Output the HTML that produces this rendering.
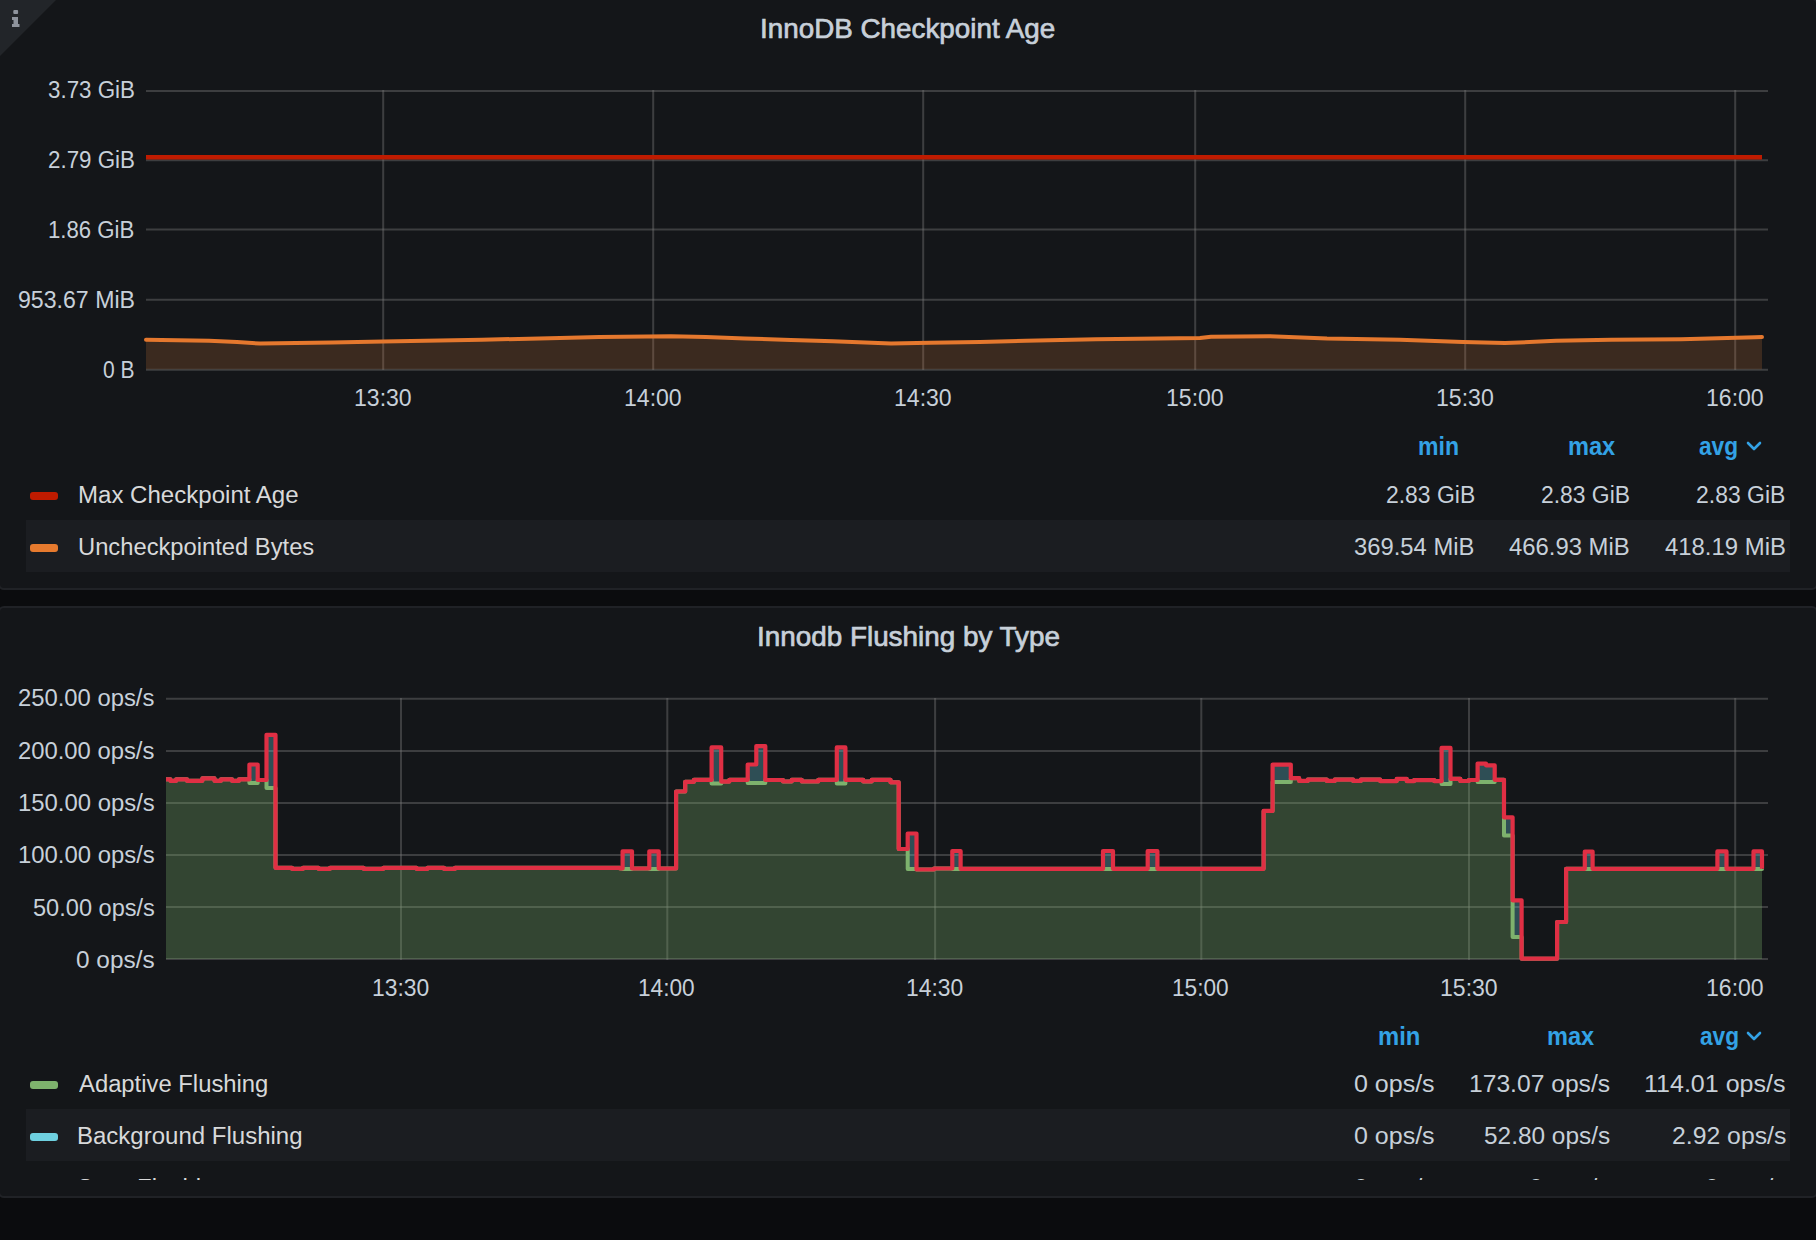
<!DOCTYPE html>
<html><head><meta charset="utf-8"><style>
*{margin:0;padding:0;box-sizing:border-box}
html,body{width:1816px;height:1240px;overflow:hidden;background:#0b0c0e;font-family:"Liberation Sans",sans-serif;color:#c7d0d9}
.panel{position:absolute;left:-2px;width:1820px;background:#141619;border:2px solid #202226;border-radius:6px;overflow:hidden}
.t{position:absolute;white-space:pre;line-height:1}
.title{font-size:28px;font-weight:400;-webkit-text-stroke:0.7px #c7d0d9;color:#c7d0d9}
.ax{font-size:23.5px;color:#c7d0d9}
.lg{font-size:23.5px;color:#d8d9da}
.lv{font-size:23.5px;color:#c7d0d9}
.hd{font-size:26px;font-weight:700;color:#33a2e5}
.sw{position:absolute;width:28px;height:8px;border-radius:3px}
.row{position:absolute;left:26px;width:1764px;height:52px;background:#1b1d21}
svg{position:absolute;left:0;top:0}
</style></head><body>

<div class="panel" style="top:-2px;height:592px"></div>
<div class="panel" style="top:606px;height:592px"></div>
<svg width="60" height="60" style="left:0;top:0"><polygon points="0,0 56,0 0,56" fill="#222529"/><rect x="13.3" y="10" width="4.8" height="4" rx="1" fill="#8e939c"/><rect x="13.5" y="17" width="4.5" height="9" fill="#8e939c"/><rect x="12" y="17" width="4" height="3" fill="#8e939c"/><rect x="12" y="24" width="7.5" height="3" fill="#8e939c"/></svg>
<div class="row" style="top:520px"></div>
<div class="row" style="top:1109px"></div>
<svg width="1816" height="1240">
<line x1="146" y1="91.0" x2="1768" y2="91.0" stroke="rgba(120,120,120,0.42)" stroke-width="2"/>
<line x1="146" y1="160.3" x2="1768" y2="160.3" stroke="rgba(120,120,120,0.42)" stroke-width="2"/>
<line x1="146" y1="229.4" x2="1768" y2="229.4" stroke="rgba(120,120,120,0.42)" stroke-width="2"/>
<line x1="146" y1="299.7" x2="1768" y2="299.7" stroke="rgba(120,120,120,0.42)" stroke-width="2"/>
<line x1="146" y1="369.8" x2="1768" y2="369.8" stroke="rgba(120,120,120,0.42)" stroke-width="2"/>
<line x1="383.2" y1="90" x2="383.2" y2="370" stroke="rgba(120,120,120,0.42)" stroke-width="2"/>
<line x1="653.2" y1="90" x2="653.2" y2="370" stroke="rgba(120,120,120,0.42)" stroke-width="2"/>
<line x1="923.2" y1="90" x2="923.2" y2="370" stroke="rgba(120,120,120,0.42)" stroke-width="2"/>
<line x1="1195.2" y1="90" x2="1195.2" y2="370" stroke="rgba(120,120,120,0.42)" stroke-width="2"/>
<line x1="1465.2" y1="90" x2="1465.2" y2="370" stroke="rgba(120,120,120,0.42)" stroke-width="2"/>
<line x1="1735.2" y1="90" x2="1735.2" y2="370" stroke="rgba(120,120,120,0.42)" stroke-width="2"/>
<polygon points="146,369.3 146,339.7 209,340.8 237,342 260,343.6 332,342.4 383,341.5 482,339.7 560,338 599,336.9 671,336.2 706,336.9 745,338.5 791,339.9 833,341.3 891,343.6 930,342.7 980,342 1026,340.8 1096,339.2 1200,338 1211,336.7 1269,336.2 1327,338.5 1400,339.7 1463,342 1505,343.1 1556,340.8 1611,339.7 1681,339.2 1755,337.3 1762,337 1762,369.3" fill="rgba(239,132,60,0.18)"/>
<polyline points="146,339.7 209,340.8 237,342 260,343.6 332,342.4 383,341.5 482,339.7 560,338 599,336.9 671,336.2 706,336.9 745,338.5 791,339.9 833,341.3 891,343.6 930,342.7 980,342 1026,340.8 1096,339.2 1200,338 1211,336.7 1269,336.2 1327,338.5 1400,339.7 1463,342 1505,343.1 1556,340.8 1611,339.7 1681,339.2 1755,337.3 1762,337" fill="none" stroke="#e5782e" stroke-width="4" stroke-linejoin="round" stroke-linecap="round"/>
<line x1="146" y1="157.2" x2="1762" y2="157.2" stroke="#bf1b00" stroke-width="4.6"/>
<line x1="166" y1="698.8" x2="1768" y2="698.8" stroke="rgba(120,120,120,0.42)" stroke-width="2"/>
<line x1="166" y1="751" x2="1768" y2="751" stroke="rgba(120,120,120,0.42)" stroke-width="2"/>
<line x1="166" y1="803" x2="1768" y2="803" stroke="rgba(120,120,120,0.42)" stroke-width="2"/>
<line x1="166" y1="855" x2="1768" y2="855" stroke="rgba(120,120,120,0.42)" stroke-width="2"/>
<line x1="166" y1="907" x2="1768" y2="907" stroke="rgba(120,120,120,0.42)" stroke-width="2"/>
<line x1="166" y1="959" x2="1768" y2="959" stroke="rgba(120,120,120,0.42)" stroke-width="2"/>
<line x1="401" y1="698" x2="401" y2="960" stroke="rgba(120,120,120,0.42)" stroke-width="2"/>
<line x1="667.3" y1="698" x2="667.3" y2="960" stroke="rgba(120,120,120,0.42)" stroke-width="2"/>
<line x1="935.1" y1="698" x2="935.1" y2="960" stroke="rgba(120,120,120,0.42)" stroke-width="2"/>
<line x1="1201.3" y1="698" x2="1201.3" y2="960" stroke="rgba(120,120,120,0.42)" stroke-width="2"/>
<line x1="1469" y1="698" x2="1469" y2="960" stroke="rgba(120,120,120,0.42)" stroke-width="2"/>
<line x1="1735.2" y1="698" x2="1735.2" y2="960" stroke="rgba(120,120,120,0.42)" stroke-width="2"/>
<polygon points="166,779.3 170.4,779.3 170.4,780.8 176.2,780.8 176.2,779.3 187,779.3 187,780.8 202.4,780.8 202.4,778.3 214.5,778.3 214.5,780.8 221,780.8 221,779.3 232,779.3 232,780.8 239,780.8 239,779.3 249.4,779.3 249.4,764.5 257.7,764.5 257.7,780 266.5,780 266.5,734.8 275.5,734.8 275.5,867.8 292,867.8 292,868.8 303,868.8 303,867.8 318.5,867.8 318.5,868.8 330,868.8 330,867.8 363.6,867.8 363.6,868.8 383.4,868.8 383.4,867.8 416.5,867.8 416.5,868.8 427.5,868.8 427.5,867.8 444,867.8 444,868.8 455,868.8 455,867.8 620,867.8 620,868.5 622.6,868.5 622.6,851.3 632,851.3 632,868.5 649.3,868.5 649.3,851.3 658.7,851.3 658.7,868.5 676.1,868.5 676.1,791.5 685.2,791.5 685.2,781.8 693.9,781.8 693.9,779.8 711.6,779.8 711.6,747.4 721.2,747.4 721.2,781.6 729.4,781.6 729.4,779.8 747.7,779.8 747.7,764.5 756.3,764.5 756.3,746.1 765.3,746.1 765.3,780 783,780 783,781.5 791.7,781.5 791.7,779.8 801.7,779.8 801.7,781.5 818.3,781.5 818.3,779.8 836.8,779.8 836.8,747.4 845.4,747.4 845.4,779.8 863.2,779.8 863.2,781.5 871.7,781.5 871.7,779.8 890.5,779.8 890.5,782.3 898.7,782.3 898.7,849 907.7,849 907.7,833.5 916.5,833.5 916.5,869.5 934,869.5 934,868.5 952.3,868.5 952.3,851 960.6,851 960.6,868.8 1103,868.8 1103,851 1113,851 1113,868.8 1147.7,868.8 1147.7,851 1157.4,851 1157.4,868.8 1263.6,868.8 1263.6,810.9 1272.6,810.9 1272.6,764.6 1290.8,764.6 1290.8,778.2 1299.2,778.2 1299.2,780.9 1307.7,780.9 1307.7,779.6 1326.8,779.6 1326.8,780.9 1334.7,780.9 1334.7,779.6 1353.2,779.6 1353.2,780.9 1360.8,780.9 1360.8,779.6 1380.2,779.6 1380.2,781.1 1396.7,781.1 1396.7,778.9 1406.7,778.9 1406.7,781.1 1414.2,781.1 1414.2,780.1 1434.2,780.1 1434.2,781.1 1441.6,781.1 1441.6,747.9 1450.5,747.9 1450.5,778.8 1460.3,778.8 1460.3,781 1468.8,781 1468.8,780 1477.6,780 1477.6,763.6 1486,763.6 1486,765.3 1494.7,765.3 1494.7,779.8 1504,779.8 1504,817.3 1512.6,817.3 1512.6,900.3 1521.6,900.3 1521.6,958.7 1557.1,958.7 1557.1,922 1566.1,922 1566.1,868.8 1584.8,868.8 1584.8,851.6 1592.6,851.6 1592.6,868.8 1717.4,868.8 1717.4,851.4 1726.5,851.4 1726.5,868.8 1753.5,868.8 1753.5,851.4 1762,851.4 1762,868.8 1762,868.8 1762,869 1753.5,869 1753.5,868.8 1726.5,868.8 1726.5,869 1717.4,869 1717.4,868.8 1592.6,868.8 1592.6,869 1584.8,869 1584.8,868.8 1566.1,868.8 1566.1,922 1557.1,922 1557.1,958.7 1521.6,958.7 1521.6,937 1512.6,937 1512.6,835.5 1504,835.5 1504,779.8 1494.7,779.8 1494.7,782 1477.6,782 1477.6,780 1468.8,780 1468.8,781 1460.3,781 1460.3,778.8 1450.5,778.8 1450.5,784 1441.6,784 1441.6,781.1 1434.2,781.1 1434.2,780.1 1414.2,780.1 1414.2,781.1 1406.7,781.1 1406.7,778.9 1396.7,778.9 1396.7,781.1 1380.2,781.1 1380.2,779.6 1360.8,779.6 1360.8,780.9 1353.2,780.9 1353.2,779.6 1334.7,779.6 1334.7,780.9 1326.8,780.9 1326.8,779.6 1307.7,779.6 1307.7,780.9 1299.2,780.9 1299.2,778.2 1290.8,778.2 1290.8,782 1272.6,782 1272.6,810.9 1263.6,810.9 1263.6,868.8 1157.4,868.8 1157.4,869 1147.7,869 1147.7,868.8 1113,868.8 1113,869 1103,869 1103,868.8 960.6,868.8 960.6,869 952.3,869 952.3,868.5 934,868.5 934,869.5 916.5,869.5 916.5,869 907.7,869 907.7,849 898.7,849 898.7,782.3 890.5,782.3 890.5,779.8 871.7,779.8 871.7,781.5 863.2,781.5 863.2,779.8 845.4,779.8 845.4,783.5 836.8,783.5 836.8,779.8 818.3,779.8 818.3,781.5 801.7,781.5 801.7,779.8 791.7,779.8 791.7,781.5 783,781.5 783,780 765.3,780 765.3,783 747.7,783 747.7,779.8 729.4,779.8 729.4,781.6 721.2,781.6 721.2,783.5 711.6,783.5 711.6,779.8 693.9,779.8 693.9,781.8 685.2,781.8 685.2,791.5 676.1,791.5 676.1,868.5 658.7,868.5 658.7,869 649.3,869 649.3,868.5 632,868.5 632,869 622.6,869 622.6,868.5 620,868.5 620,867.8 455,867.8 455,868.8 444,868.8 444,867.8 427.5,867.8 427.5,868.8 416.5,868.8 416.5,867.8 383.4,867.8 383.4,868.8 363.6,868.8 363.6,867.8 330,867.8 330,868.8 318.5,868.8 318.5,867.8 303,867.8 303,868.8 292,868.8 292,867.8 275.5,867.8 275.5,788 266.5,788 266.5,780 257.7,780 257.7,783 249.4,783 249.4,779.3 239,779.3 239,780.8 232,780.8 232,779.3 221,779.3 221,780.8 214.5,780.8 214.5,778.3 202.4,778.3 202.4,780.8 187,780.8 187,779.3 176.2,779.3 176.2,780.8 170.4,780.8 170.4,779.3 166,779.3" fill="rgba(110,208,224,0.3)"/>
<polygon points="166,959 166,779.3 170.4,779.3 170.4,780.8 176.2,780.8 176.2,779.3 187,779.3 187,780.8 202.4,780.8 202.4,778.3 214.5,778.3 214.5,780.8 221,780.8 221,779.3 232,779.3 232,780.8 239,780.8 239,779.3 249.4,779.3 249.4,783 257.7,783 257.7,780 266.5,780 266.5,788 275.5,788 275.5,867.8 292,867.8 292,868.8 303,868.8 303,867.8 318.5,867.8 318.5,868.8 330,868.8 330,867.8 363.6,867.8 363.6,868.8 383.4,868.8 383.4,867.8 416.5,867.8 416.5,868.8 427.5,868.8 427.5,867.8 444,867.8 444,868.8 455,868.8 455,867.8 620,867.8 620,868.5 622.6,868.5 622.6,869 632,869 632,868.5 649.3,868.5 649.3,869 658.7,869 658.7,868.5 676.1,868.5 676.1,791.5 685.2,791.5 685.2,781.8 693.9,781.8 693.9,779.8 711.6,779.8 711.6,783.5 721.2,783.5 721.2,781.6 729.4,781.6 729.4,779.8 747.7,779.8 747.7,783 765.3,783 765.3,780 783,780 783,781.5 791.7,781.5 791.7,779.8 801.7,779.8 801.7,781.5 818.3,781.5 818.3,779.8 836.8,779.8 836.8,783.5 845.4,783.5 845.4,779.8 863.2,779.8 863.2,781.5 871.7,781.5 871.7,779.8 890.5,779.8 890.5,782.3 898.7,782.3 898.7,849 907.7,849 907.7,869 916.5,869 916.5,869.5 934,869.5 934,868.5 952.3,868.5 952.3,869 960.6,869 960.6,868.8 1103,868.8 1103,869 1113,869 1113,868.8 1147.7,868.8 1147.7,869 1157.4,869 1157.4,868.8 1263.6,868.8 1263.6,810.9 1272.6,810.9 1272.6,782 1290.8,782 1290.8,778.2 1299.2,778.2 1299.2,780.9 1307.7,780.9 1307.7,779.6 1326.8,779.6 1326.8,780.9 1334.7,780.9 1334.7,779.6 1353.2,779.6 1353.2,780.9 1360.8,780.9 1360.8,779.6 1380.2,779.6 1380.2,781.1 1396.7,781.1 1396.7,778.9 1406.7,778.9 1406.7,781.1 1414.2,781.1 1414.2,780.1 1434.2,780.1 1434.2,781.1 1441.6,781.1 1441.6,784 1450.5,784 1450.5,778.8 1460.3,778.8 1460.3,781 1468.8,781 1468.8,780 1477.6,780 1477.6,782 1494.7,782 1494.7,779.8 1504,779.8 1504,835.5 1512.6,835.5 1512.6,937 1521.6,937 1521.6,958.7 1557.1,958.7 1557.1,922 1566.1,922 1566.1,868.8 1584.8,868.8 1584.8,869 1592.6,869 1592.6,868.8 1717.4,868.8 1717.4,869 1726.5,869 1726.5,868.8 1753.5,868.8 1753.5,869 1762,869 1762,868.8 1762,959" fill="rgba(126,178,109,0.3)"/>
<polyline points="166,779.3 170.4,779.3 170.4,780.8 176.2,780.8 176.2,779.3 187,779.3 187,780.8 202.4,780.8 202.4,778.3 214.5,778.3 214.5,780.8 221,780.8 221,779.3 232,779.3 232,780.8 239,780.8 239,779.3 249.4,779.3 249.4,783 257.7,783 257.7,780 266.5,780 266.5,788 275.5,788 275.5,867.8 292,867.8 292,868.8 303,868.8 303,867.8 318.5,867.8 318.5,868.8 330,868.8 330,867.8 363.6,867.8 363.6,868.8 383.4,868.8 383.4,867.8 416.5,867.8 416.5,868.8 427.5,868.8 427.5,867.8 444,867.8 444,868.8 455,868.8 455,867.8 620,867.8 620,868.5 622.6,868.5 622.6,869 632,869 632,868.5 649.3,868.5 649.3,869 658.7,869 658.7,868.5 676.1,868.5 676.1,791.5 685.2,791.5 685.2,781.8 693.9,781.8 693.9,779.8 711.6,779.8 711.6,783.5 721.2,783.5 721.2,781.6 729.4,781.6 729.4,779.8 747.7,779.8 747.7,783 765.3,783 765.3,780 783,780 783,781.5 791.7,781.5 791.7,779.8 801.7,779.8 801.7,781.5 818.3,781.5 818.3,779.8 836.8,779.8 836.8,783.5 845.4,783.5 845.4,779.8 863.2,779.8 863.2,781.5 871.7,781.5 871.7,779.8 890.5,779.8 890.5,782.3 898.7,782.3 898.7,849 907.7,849 907.7,869 916.5,869 916.5,869.5 934,869.5 934,868.5 952.3,868.5 952.3,869 960.6,869 960.6,868.8 1103,868.8 1103,869 1113,869 1113,868.8 1147.7,868.8 1147.7,869 1157.4,869 1157.4,868.8 1263.6,868.8 1263.6,810.9 1272.6,810.9 1272.6,782 1290.8,782 1290.8,778.2 1299.2,778.2 1299.2,780.9 1307.7,780.9 1307.7,779.6 1326.8,779.6 1326.8,780.9 1334.7,780.9 1334.7,779.6 1353.2,779.6 1353.2,780.9 1360.8,780.9 1360.8,779.6 1380.2,779.6 1380.2,781.1 1396.7,781.1 1396.7,778.9 1406.7,778.9 1406.7,781.1 1414.2,781.1 1414.2,780.1 1434.2,780.1 1434.2,781.1 1441.6,781.1 1441.6,784 1450.5,784 1450.5,778.8 1460.3,778.8 1460.3,781 1468.8,781 1468.8,780 1477.6,780 1477.6,782 1494.7,782 1494.7,779.8 1504,779.8 1504,835.5 1512.6,835.5 1512.6,937 1521.6,937 1521.6,958.7 1557.1,958.7 1557.1,922 1566.1,922 1566.1,868.8 1584.8,868.8 1584.8,869 1592.6,869 1592.6,868.8 1717.4,868.8 1717.4,869 1726.5,869 1726.5,868.8 1753.5,868.8 1753.5,869 1762,869 1762,868.8" fill="none" stroke="#7eb26d" stroke-width="4" stroke-linejoin="round"/>
<polyline points="166,779.3 170.4,779.3 170.4,780.8 176.2,780.8 176.2,779.3 187,779.3 187,780.8 202.4,780.8 202.4,778.3 214.5,778.3 214.5,780.8 221,780.8 221,779.3 232,779.3 232,780.8 239,780.8 239,779.3 249.4,779.3 249.4,764.5 257.7,764.5 257.7,780 266.5,780 266.5,734.8 275.5,734.8 275.5,867.8 292,867.8 292,868.8 303,868.8 303,867.8 318.5,867.8 318.5,868.8 330,868.8 330,867.8 363.6,867.8 363.6,868.8 383.4,868.8 383.4,867.8 416.5,867.8 416.5,868.8 427.5,868.8 427.5,867.8 444,867.8 444,868.8 455,868.8 455,867.8 620,867.8 620,868.5 622.6,868.5 622.6,851.3 632,851.3 632,868.5 649.3,868.5 649.3,851.3 658.7,851.3 658.7,868.5 676.1,868.5 676.1,791.5 685.2,791.5 685.2,781.8 693.9,781.8 693.9,779.8 711.6,779.8 711.6,747.4 721.2,747.4 721.2,781.6 729.4,781.6 729.4,779.8 747.7,779.8 747.7,764.5 756.3,764.5 756.3,746.1 765.3,746.1 765.3,780 783,780 783,781.5 791.7,781.5 791.7,779.8 801.7,779.8 801.7,781.5 818.3,781.5 818.3,779.8 836.8,779.8 836.8,747.4 845.4,747.4 845.4,779.8 863.2,779.8 863.2,781.5 871.7,781.5 871.7,779.8 890.5,779.8 890.5,782.3 898.7,782.3 898.7,849 907.7,849 907.7,833.5 916.5,833.5 916.5,869.5 934,869.5 934,868.5 952.3,868.5 952.3,851 960.6,851 960.6,868.8 1103,868.8 1103,851 1113,851 1113,868.8 1147.7,868.8 1147.7,851 1157.4,851 1157.4,868.8 1263.6,868.8 1263.6,810.9 1272.6,810.9 1272.6,764.6 1290.8,764.6 1290.8,778.2 1299.2,778.2 1299.2,780.9 1307.7,780.9 1307.7,779.6 1326.8,779.6 1326.8,780.9 1334.7,780.9 1334.7,779.6 1353.2,779.6 1353.2,780.9 1360.8,780.9 1360.8,779.6 1380.2,779.6 1380.2,781.1 1396.7,781.1 1396.7,778.9 1406.7,778.9 1406.7,781.1 1414.2,781.1 1414.2,780.1 1434.2,780.1 1434.2,781.1 1441.6,781.1 1441.6,747.9 1450.5,747.9 1450.5,778.8 1460.3,778.8 1460.3,781 1468.8,781 1468.8,780 1477.6,780 1477.6,763.6 1486,763.6 1486,765.3 1494.7,765.3 1494.7,779.8 1504,779.8 1504,817.3 1512.6,817.3 1512.6,900.3 1521.6,900.3 1521.6,958.7 1557.1,958.7 1557.1,922 1566.1,922 1566.1,868.8 1584.8,868.8 1584.8,851.6 1592.6,851.6 1592.6,868.8 1717.4,868.8 1717.4,851.4 1726.5,851.4 1726.5,868.8 1753.5,868.8 1753.5,851.4 1762,851.4 1762,868.8" fill="none" stroke="#e02f44" stroke-width="4.2" stroke-linejoin="round"/>
</svg>
<div class="t title" id="t0" style="left:760px;top:15px;transform:scaleX(0.9932);transform-origin:0 0">InnoDB Checkpoint Age</div>
<div class="t title" id="t1" style="left:756.6px;top:622.6px;transform:scaleX(0.9947);transform-origin:0 0">Innodb Flushing by Type</div>
<div class="t ax" id="t2" style="left:48.2px;top:79.1px;transform:scaleX(0.9511);transform-origin:0 0">3.73 GiB</div>
<div class="t ax" id="t3" style="left:48.2px;top:149.1px;transform:scaleX(0.9511);transform-origin:0 0">2.79 GiB</div>
<div class="t ax" id="t4" style="left:48.4px;top:219.1px;transform:scaleX(0.9444);transform-origin:0 0">1.86 GiB</div>
<div class="t ax" id="t5" style="left:18px;top:289.1px;transform:scaleX(0.9839);transform-origin:0 0">953.67 MiB</div>
<div class="t ax" id="t6" style="left:102.6px;top:359.1px;transform:scaleX(0.8943);transform-origin:0 0">0 B</div>
<div class="t ax" id="t7" style="left:354px;top:387px;transform:scaleX(0.9807);transform-origin:0 0">13:30</div>
<div class="t ax" id="t8" style="left:624px;top:387px;transform:scaleX(0.9807);transform-origin:0 0">14:00</div>
<div class="t ax" id="t9" style="left:894px;top:387px;transform:scaleX(0.9807);transform-origin:0 0">14:30</div>
<div class="t ax" id="t10" style="left:1166px;top:387px;transform:scaleX(0.9807);transform-origin:0 0">15:00</div>
<div class="t ax" id="t11" style="left:1435.8px;top:387px;transform:scaleX(0.9825);transform-origin:0 0">15:30</div>
<div class="t ax" id="t12" style="left:1706px;top:387px;transform:scaleX(0.9807);transform-origin:0 0">16:00</div>
<div class="t ax" id="t13" style="left:18.2px;top:687.2px;transform:scaleX(1.0134);transform-origin:0 0">250.00 ops/s</div>
<div class="t ax" id="t14" style="left:18.2px;top:739.6px;transform:scaleX(1.0134);transform-origin:0 0">200.00 ops/s</div>
<div class="t ax" id="t15" style="left:18.4px;top:792px;transform:scaleX(1.0165);transform-origin:0 0">150.00 ops/s</div>
<div class="t ax" id="t16" style="left:18.4px;top:844.3px;transform:scaleX(1.0165);transform-origin:0 0">100.00 ops/s</div>
<div class="t ax" id="t17" style="left:33px;top:896.7px;transform:scaleX(1.0033);transform-origin:0 0">50.00 ops/s</div>
<div class="t ax" id="t18" style="left:76.2px;top:949.1px;transform:scaleX(1.0373);transform-origin:0 0">0 ops/s</div>
<div class="t ax" id="t19" style="left:371.8px;top:977px;transform:scaleX(0.9741);transform-origin:0 0">13:30</div>
<div class="t ax" id="t20" style="left:638.2px;top:977px;transform:scaleX(0.9638);transform-origin:0 0">14:00</div>
<div class="t ax" id="t21" style="left:905.8px;top:977px;transform:scaleX(0.9741);transform-origin:0 0">14:30</div>
<div class="t ax" id="t22" style="left:1172.4px;top:977px;transform:scaleX(0.9638);transform-origin:0 0">15:00</div>
<div class="t ax" id="t23" style="left:1439.8px;top:977px;transform:scaleX(0.9807);transform-origin:0 0">15:30</div>
<div class="t ax" id="t24" style="left:1706px;top:977px;transform:scaleX(0.9807);transform-origin:0 0">16:00</div>
<div class="t hd" id="t25" style="left:1418.3px;top:432.9px;transform:scaleX(0.8864);transform-origin:0 0">min</div>
<div class="t hd" id="t26" style="left:1567.5px;top:432.9px;transform:scaleX(0.9080);transform-origin:0 0">max</div>
<div class="t hd" id="t27" style="left:1699.4px;top:432.9px;transform:scaleX(0.8721);transform-origin:0 0">avg</div>
<div class="t lg" id="t28" style="left:77.8px;top:484px;transform:scaleX(1.0235);transform-origin:0 0">Max Checkpoint Age</div>
<div class="t lg" id="t29" style="left:78.2px;top:535.9px;transform:scaleX(1.0103);transform-origin:0 0">Uncheckpointed Bytes</div>
<div class="t lv" id="t30" style="left:1385.8px;top:483.8px;transform:scaleX(0.9756);transform-origin:0 0">2.83 GiB</div>
<div class="t lv" id="t31" style="left:1540.8px;top:483.8px;transform:scaleX(0.9733);transform-origin:0 0">2.83 GiB</div>
<div class="t lv" id="t32" style="left:1696.2px;top:483.8px;transform:scaleX(0.9767);transform-origin:0 0">2.83 GiB</div>
<div class="t lv" id="t33" style="left:1354.4px;top:535.9px;transform:scaleX(1.0127);transform-origin:0 0">369.54 MiB</div>
<div class="t lv" id="t34" style="left:1509.4px;top:535.9px;transform:scaleX(1.0153);transform-origin:0 0">466.93 MiB</div>
<div class="t lv" id="t35" style="left:1665px;top:535.9px;transform:scaleX(1.0169);transform-origin:0 0">418.19 MiB</div>
<div class="t hd" id="t36" style="left:1377.5px;top:1023px;transform:scaleX(0.9163);transform-origin:0 0">min</div>
<div class="t hd" id="t37" style="left:1546.9px;top:1023px;transform:scaleX(0.9059);transform-origin:0 0">max</div>
<div class="t hd" id="t38" style="left:1699.6px;top:1023px;transform:scaleX(0.8727);transform-origin:0 0">avg</div>
<div class="t lg" id="t39" style="left:78.8px;top:1072.7px;transform:scaleX(1.0134);transform-origin:0 0">Adaptive Flushing</div>
<div class="t lg" id="t40" style="left:77.2px;top:1124.8px;transform:scaleX(1.0216);transform-origin:0 0">Background Flushing</div>
<div class="t lv" id="t41" style="left:1353.8px;top:1072.7px;transform:scaleX(1.0640);transform-origin:0 0">0 ops/s</div>
<div class="t lv" id="t42" style="left:1469.2px;top:1072.7px;transform:scaleX(1.0481);transform-origin:0 0">173.07 ops/s</div>
<div class="t lv" id="t43" style="left:1644.3px;top:1072.7px;transform:scaleX(1.0649);transform-origin:0 0">114.01 ops/s</div>
<div class="t lv" id="t44" style="left:1353.8px;top:1124.8px;transform:scaleX(1.0640);transform-origin:0 0">0 ops/s</div>
<div class="t lv" id="t45" style="left:1483.8px;top:1124.8px;transform:scaleX(1.0380);transform-origin:0 0">52.80 ops/s</div>
<div class="t lv" id="t46" style="left:1671.8px;top:1124.8px;transform:scaleX(1.0542);transform-origin:0 0">2.92 ops/s</div>
<div class="sw" style="left:30px;top:491.7px;background:#bf1b00"></div>
<div class="sw" style="left:30px;top:543.7px;background:#e67a2e"></div>
<div class="sw" style="left:30px;top:1080.9px;background:#7eb26d"></div>
<div class="sw" style="left:30px;top:1132.8px;background:#6ed0e0"></div>
<svg width="20" height="14" style="left:1745px;top:440px"><polyline points="3,3 9,9 15,3" fill="none" stroke="#33a2e5" stroke-width="2.6" stroke-linecap="round" stroke-linejoin="round"/></svg>
<svg width="20" height="14" style="left:1745px;top:1030px"><polyline points="3,3 9,9 15,3" fill="none" stroke="#33a2e5" stroke-width="2.6" stroke-linecap="round" stroke-linejoin="round"/></svg>
<div style="position:absolute;left:0;top:1161px;width:1816px;height:19px;overflow:hidden">
<div class="t lv" style="left:1353.8px;top:16.2px;transform:scaleX(1.0640);transform-origin:0 0">0 ops/s</div>
<div class="t lv" style="left:1529.1px;top:16.2px;transform:scaleX(1.0640);transform-origin:0 0">0 ops/s</div>
<div class="t lv" style="left:1704.8px;top:16.2px;transform:scaleX(1.0640);transform-origin:0 0">0 ops/s</div>
<div class="t lg" style="left:77.2px;top:16.2px;transform:scaleX(1.0216);transform-origin:0 0">Sync Flushing</div>
</div>
</body></html>
